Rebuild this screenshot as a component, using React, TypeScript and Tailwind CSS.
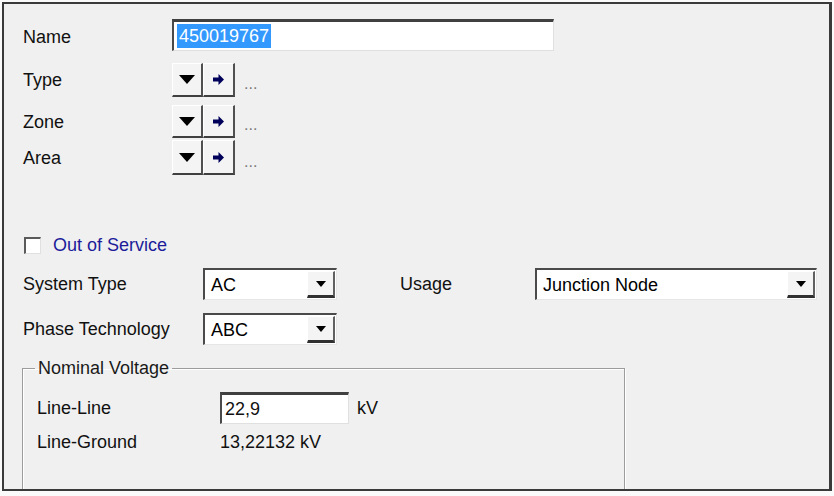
import type { ReactNode } from 'react'

const font = { fontFamily: '"Liberation Sans", Arial, sans-serif' }

function PickButtons() {
  return (
    <div className="flex items-end h-full">
      <div className="flex h-full">
        <button className="w-[31px] h-full flex items-center justify-center bg-[#f4f4f4] border-t border-l border-t-white border-l-white border-r-2 border-b-2 border-r-[#505050] border-b-[#404040]">
          <svg width="16" height="9" viewBox="0 0 16 9">
            <path d="M0 0h16L8 9z" fill="#000" />
          </svg>
        </button>
        <button className="w-[32px] h-full flex items-center justify-center bg-[#f4f4f4] border-t border-l border-t-white border-l-white border-r-2 border-b-2 border-r-[#505050] border-b-[#404040]">
          <svg width="11" height="11" viewBox="0 0 11 11">
            <path d="M0 3.5h5.5V0L11 5.5 5.5 11V7.5H0z" fill="#00005a" />
          </svg>
        </button>
      </div>
      <span className="ml-[9px] mb-[5px] text-[16px] leading-none text-[#7a7a7a]">...</span>
    </div>
  )
}

function Combo({ value, width }: { value: string; width: string }) {
  return (
    <div
      className={`${width} h-full flex bg-white border-t-2 border-l-2 border-t-[#4a4a4a] border-l-[#4a4a4a] border-r border-b border-r-[#e6e6e6] border-b-[#e6e6e6]`}
    >
      <div className="flex-1 flex items-center pl-[6px] text-black">{value}</div>
      <div className="w-[28px] my-[1px] mr-[1px] flex items-center justify-center bg-[#f4f4f4] border-t border-l border-t-white border-l-white border-r-2 border-b-[3px] border-r-[#606060] border-b-[#303030]">
        <svg width="10" height="6" viewBox="0 0 10 6">
          <path d="M0 0h10L5 6z" fill="#000" />
        </svg>
      </div>
    </div>
  )
}

function Row({ label, labelWidth, children, className }: { label: string; labelWidth: string; children: ReactNode; className: string }) {
  return (
    <div className={`flex items-center ${className}`}>
      <div className={`${labelWidth} shrink-0`}>{label}</div>
      {children}
    </div>
  )
}

export default function App() {
  return (
    <div className="w-[834px] h-[496px] bg-[#fafafa] pl-[2px] pt-[2px] text-[18px] leading-[20px] text-[#111]" style={font}>
      <div className="w-[830px] h-[489px] bg-[#f0f0f0] border-2 border-[#3a3a3a] border-r-[3px] overflow-hidden">
        <div className="flex flex-col pl-[19px]">
          <Row label="Name" labelWidth="w-[149px] pt-[3px]" className="mt-[15px] h-[32px]">
            <div className="w-[382px] h-full flex items-center bg-white border-t-[3px] border-l-2 border-t-[#404040] border-l-[#4a4a4a] border-r border-b border-r-[#e0e0e0] border-b-[#e0e0e0]">
              <span className="ml-[3px] px-[2px] h-[24px] flex items-center bg-[#3399ff] text-white">450019767</span>
            </div>
          </Row>

          <Row label="Type" labelWidth="w-[149px]" className="mt-[12px] h-[34px]">
            <PickButtons />
          </Row>
          <Row label="Zone" labelWidth="w-[149px]" className="mt-[8px] h-[33px]">
            <PickButtons />
          </Row>
          <Row label="Area" labelWidth="w-[149px]" className="mt-[2px] h-[35px]">
            <PickButtons />
          </Row>

          <label className="mt-[60px] h-[20px] flex items-center">
            <span className="ml-[1px] w-[17px] h-[17px] bg-white border-t-2 border-l-2 border-t-[#5a5a5a] border-l-[#5a5a5a] border-r border-b border-r-[#e0e0e0] border-b-[#e0e0e0]" />
            <span className="ml-[12px] text-[#1c1c9a]">Out of Service</span>
          </label>

          <div className="mt-[13px] h-[32px] flex items-center">
            <div className="w-[180px] shrink-0">System Type</div>
            <Combo value="AC" width="w-[134px]" />
            <div className="ml-[63px] w-[135px] shrink-0">Usage</div>
            <Combo value="Junction Node" width="w-[282px]" />
          </div>

          <Row label="Phase Technology" labelWidth="w-[180px]" className="mt-[13px] h-[32px]">
            <Combo value="ABC" width="w-[134px]" />
          </Row>

          <fieldset className="mt-[13px] ml-[-1px] w-[603px] h-[160px] border border-[#9c9c9c] shadow-[inset_1px_1px_0_#fff,1px_1px_0_#fff]">
            <legend className="ml-[12px] px-[3px] leading-[20px] text-[#1a1a1a]">Nominal Voltage</legend>
            <div className="flex flex-col pl-[14px]">
              <Row label="Line-Line" labelWidth="w-[183px]" className="mt-[14px] h-[32px]">
                <div className="w-[129px] h-full flex items-center pl-[3px] bg-white border-t-[3px] border-l-2 border-t-[#404040] border-l-[#4a4a4a] border-r border-b border-r-[#e0e0e0] border-b-[#e0e0e0]">
                  22,9
                </div>
                <span className="ml-[8px]">kV</span>
              </Row>
              <Row label="Line-Ground" labelWidth="w-[183px]" className="mt-[8px] h-[20px]">
                <span>13,22132 kV</span>
              </Row>
            </div>
          </fieldset>
        </div>
      </div>
    </div>
  )
}
